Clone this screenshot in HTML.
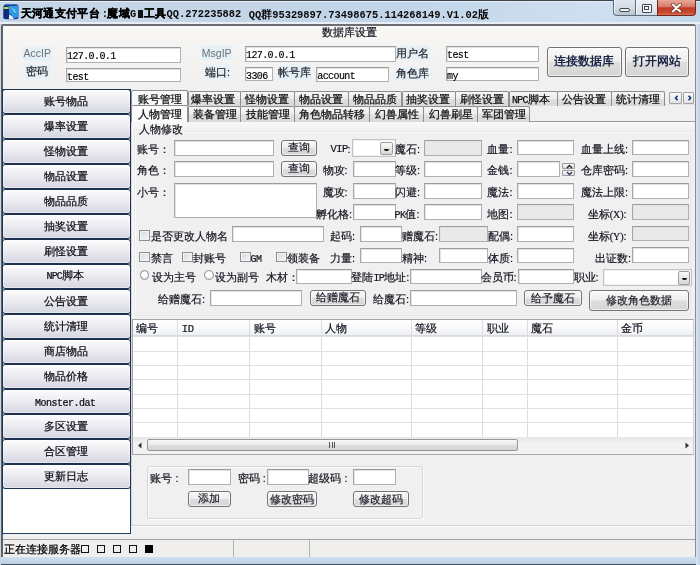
<!DOCTYPE html><html><head><meta charset="utf-8"><style>
*{margin:0;padding:0;box-sizing:border-box}
html,body{width:700px;height:565px;overflow:hidden}
body{position:relative;will-change:transform;background:#c8d7e6;font-family:"Liberation Sans",sans-serif;color:#222}
div{position:absolute}
.t{white-space:nowrap;color:#141420;-webkit-text-stroke:0.2px #141420}
.inp{background:#fff;border:1px solid #b0b0b0;border-top-color:#9c9c9c;border-left-color:#a8a8a8;box-shadow:inset 1px 1px 0 #e2e2e2}
.mv{position:absolute;left:0px;top:2.5px;font:10px/11px "Liberation Mono",monospace;letter-spacing:-0.6px;color:#000;white-space:nowrap;-webkit-text-stroke:0.15px #000}
.btn{border:1px solid #747474;border-radius:3px;background:linear-gradient(#fafafa,#ededed 48%,#dedede 52%,#d5d5d5);box-shadow:inset 0 0 0 1px rgba(255,255,255,.6);display:flex;align-items:center;justify-content:center}
.btn span{font-size:11px;line-height:11px;color:#1e1e2a;white-space:nowrap;-webkit-text-stroke:0.2px #1e1e2a}
.nav{border:1px solid #1c3050;border-radius:3px;background:linear-gradient(#fcfcfd,#ececf1 45%,#dcdce6 85%,#d6d6e2);box-shadow:inset 0 0 0 1px rgba(255,255,255,.4);display:flex;align-items:center;justify-content:center}
.nav span{font-size:11px;line-height:11px;color:#0c0c14;white-space:nowrap;-webkit-text-stroke:0.22px #0c0c14;margin-left:-1px}
.tab{border:1px solid #8e8e8e;border-bottom:none;border-radius:2px 2px 0 0;background:linear-gradient(#f6f6f6,#ececec 48%,#dedede 52%,#dadada)}
.tab span,.stab span{position:absolute;font-size:11px;line-height:11px;white-space:nowrap;color:#111;-webkit-text-stroke:0.25px #111}
.stab{border:1px solid #8e8e8e;border-bottom:none;border-radius:2px 2px 0 0;background:#f8f9fa}
.lb{background:#e4eff6;box-shadow:inset 0 0 2px 1px #f2f6f8;display:flex;align-items:center;justify-content:center}
.lb span{font-size:11px;line-height:11px;white-space:nowrap;color:#26262e;-webkit-text-stroke:0.2px #26262e}
.cmb{background:#fff;border:1.5px solid #c2c2c2;box-shadow:inset 0 0 0 1px #f0f0f0}
.cbtn{border:1px solid #9c9c9c;border-radius:2px;background:linear-gradient(#fbfbfb,#e6e6e6 50%,#d6d6d6)}
.cbtn i{position:absolute;left:3px;top:5.5px;width:5px;height:2px;background:#111;border-radius:0 0 2px 2px}
.chk{border:1px solid #8e8f8f;background:linear-gradient(135deg,#d4dbe2,#f4f6f8);box-shadow:inset 0 0 0 1px #f4f4f4}
.rad{border:1px solid #8e8f8f;border-radius:50%;background:radial-gradient(circle at 50% 45%,#ffffff 30%,#dcdcdc)}
</style></head><body><div style="left:0px;top:0px;width:700px;height:565px;background:#c6d8ea;"></div>
<div style="left:0px;top:0px;width:700px;height:1px;background:#3e454e;"></div>
<div style="left:0px;top:1px;width:700px;height:1px;background:#e4ecf4;"></div>
<div style="left:0px;top:2px;width:700px;height:21px;background:linear-gradient(90deg,#c6d6e6,#c2d4e8 55%,#cddff0 85%,#c4d6ea);"></div>
<div style="left:0px;top:22px;width:700px;height:1.5px;background:#e8eef4;"></div>
<svg style="position:absolute;left:3px;top:4px" width="16" height="16" viewBox="0 0 16 16">
<rect x="0.5" y="0.2" width="15" height="15" rx="2.5" fill="#1a4c9c"/>
<rect x="0.5" y="2" width="5.5" height="13" rx="1" fill="#0c2a7a"/>
<rect x="0.7" y="3" width="5" height="2" fill="#c8d040"/>
<path d="M6 2 L15 2 L15 13 L11 14 Q8 10 6 9 Z" fill="#2f9ae6"/>
<path d="M9 4 Q12 5 13 9 L11 8 Q10 6 9 4Z" fill="#8fd4fa"/>
<path d="M6 10.5 L9 12 L11 15 L6 15 Z" fill="#e4f0fa"/>
</svg>
<div style="left:20.5px;top:7px;white-space:nowrap;font:bold 11.3px/12px 'Liberation Sans',sans-serif;color:#000;letter-spacing:0.4px;-webkit-text-stroke:0.3px #000;">天河通支付平台</div>
<div style="left:101.8px;top:7.5px;white-space:nowrap;font:bold 10.4px/12px 'Liberation Mono',monospace;color:#0a0a0a;">:</div>
<div style="left:107.2px;top:7px;white-space:nowrap;font:bold 11.3px/12px 'Liberation Sans',sans-serif;color:#000;letter-spacing:0.4px;-webkit-text-stroke:0.3px #000;">魔域</div>
<div style="left:130px;top:7.5px;white-space:nowrap;font:bold 10.4px/12px 'Liberation Mono',monospace;color:#0a0a0a;">G</div>
<div style="left:137.9px;top:10.4px;width:5.1px;height:7.2px;background:#111;"></div>
<div style="left:143.7px;top:7px;white-space:nowrap;font:bold 11.3px/12px 'Liberation Sans',sans-serif;color:#000;letter-spacing:0.4px;-webkit-text-stroke:0.3px #000;">工具</div>
<div style="left:166.5px;top:7.5px;white-space:nowrap;font:bold 10.4px/12px 'Liberation Mono',monospace;color:#0a0a0a;">QQ.272235882</div>
<div style="left:248.7px;top:7.5px;white-space:nowrap;font:bold 10.4px/12px 'Liberation Mono',monospace;color:#0a0a0a;">QQ<span style="font-size:11.3px;font-family:'Liberation Sans'">群</span>95329897.73498675.114268149.V1.02<span style="font-size:11.3px;font-family:'Liberation Sans'">版</span></div>
<div style="left:612.5px;top:0;width:23px;height:16px;border:1px solid #5e6b7a;border-top:none;border-right:none;border-radius:0 0 0 4px;background:linear-gradient(#dfe6ee,#d4dce6 50%,#b8c4d2);box-shadow:inset 1px 0 0 #f0f4f8"><div style="left:5.5px;top:8px;width:11px;height:4px;border-radius:2px;background:#f4f6f8;border:1px solid #404852"></div></div>
<div style="left:635px;top:0;width:22px;height:16px;border:1px solid #5e6b7a;border-top:none;border-right:none;background:linear-gradient(#eef2f6,#e2e8ee 50%,#d2dae4);box-shadow:inset 1px 0 0 #f4f6f8"><div style="left:5.5px;top:4px;width:10.5px;height:8.5px;background:#f4f6f8;border:1.5px solid #404852;border-radius:1px"><div style="left:1px;top:1px;width:5.5px;height:3.5px;border:1px solid #404852;background:#fff"></div></div></div>
<div style="left:657px;top:0;width:39px;height:16px;border:1px solid #6e2a22;border-top:none;border-radius:0 0 4px 0;background:linear-gradient(#e8a898,#d87868 45%,#c23a24 52%,#c84a30 85%,#e07050)"></div>
<svg style="position:absolute;left:670px;top:3px" width="13" height="10" viewBox="0 0 13 10"><path d="M2.8 1.6 L10.2 8.4 M10.2 1.6 L2.8 8.4" stroke="#6a3a30" stroke-width="3.4" stroke-linecap="round"/><path d="M2.8 1.6 L10.2 8.4 M10.2 1.6 L2.8 8.4" stroke="#fff" stroke-width="2" stroke-linecap="round"/></svg>
<div style="left:1px;top:24px;width:695px;height:533px;background:#f0f0f0;border-top:2px solid #6a6d71;border-left:2px solid #5e6166;border-right:1.5px solid #8a8d90;border-radius:2px 3px 0 0;"></div>
<div style="left:3px;top:26px;width:691.5px;height:63px;background:linear-gradient(#f8f7f4,#f5f4f2 30%,#f0f0f0);"></div>
<div class="t" style="left:322px;top:26.5px;font-size:11px;line-height:11px;">数据库设置</div>
<div class="lb" style="left:21.5px;top:45.5px;width:31.5px;height:16px;"><span style="font-size:10.5px;color:#6c7278;-webkit-text-stroke:0">AccIP</span></div>
<div class="lb" style="left:23.5px;top:63.5px;width:27.2px;height:16.5px;"><span style="">密码</span></div>
<div class="lb" style="left:200px;top:45px;width:33.4px;height:16px;"><span style="font-size:10.5px;color:#6c7278;-webkit-text-stroke:0">MsgIP</span></div>
<div class="lb" style="left:203.7px;top:64px;width:27.7px;height:16px;"><span style="">端口:</span></div>
<div class="lb" style="left:275.7px;top:65px;width:37.2px;height:15.6px;"><span style="">帐号库</span></div>
<div class="lb" style="left:394px;top:45px;width:36px;height:16.4px;"><span style="">用户名</span></div>
<div class="lb" style="left:395px;top:65.7px;width:35px;height:14.9px;"><span style="">角色库</span></div>
<div class="inp" style="left:66px;top:47px;width:115px;height:15.6px;"><span class="mv">127.0.0.1</span></div>
<div class="inp" style="left:66px;top:68.3px;width:115px;height:13.7px;"><span class="mv">test</span></div>
<div class="inp" style="left:245px;top:46.3px;width:151px;height:16px;"><span class="mv">127.0.0.1</span></div>
<div class="inp" style="left:245px;top:67px;width:28.4px;height:14.4px;"><span class="mv">3306</span></div>
<div class="inp" style="left:316.3px;top:67px;width:72.7px;height:15px;"><span class="mv">account</span></div>
<div class="inp" style="left:446px;top:46.3px;width:92.6px;height:16px;"><span class="mv">test</span></div>
<div class="inp" style="left:446px;top:67px;width:92.6px;height:14.4px;"><span class="mv">my</span></div>
<div class="btn" style="left:546.5px;top:46.6px;width:75.3px;height:30.6px;"><span><b style="color:#1c2444;font-size:11.5px;-webkit-text-stroke:0">连接数据库</b></span></div>
<div class="btn" style="left:624.7px;top:46.6px;width:64.3px;height:30.6px;"><span><b style="color:#1c2444;font-size:11.5px;-webkit-text-stroke:0">打开网站</b></span></div>
<div style="left:1.5px;top:89px;width:129.5px;height:444.5px;background:#fff;border:1.5px solid #24405e;"></div>
<div class="nav" style="left:1.5px;top:89px;width:129.5px;height:24.5px;"><span>账号物品</span></div>
<div class="nav" style="left:1.5px;top:114px;width:129.5px;height:24.5px;"><span>爆率设置</span></div>
<div class="nav" style="left:1.5px;top:139px;width:129.5px;height:24.5px;"><span>怪物设置</span></div>
<div class="nav" style="left:1.5px;top:164px;width:129.5px;height:24.5px;"><span>物品设置</span></div>
<div class="nav" style="left:1.5px;top:189px;width:129.5px;height:24.5px;"><span>物品品质</span></div>
<div class="nav" style="left:1.5px;top:214px;width:129.5px;height:24.5px;"><span>抽奖设置</span></div>
<div class="nav" style="left:1.5px;top:239px;width:129.5px;height:24.5px;"><span>刷怪设置</span></div>
<div class="nav" style="left:1.5px;top:264px;width:129.5px;height:24.5px;"><span><span style="font-family:'Liberation Mono',monospace;font-size:10px;letter-spacing:-0.8px">NPC</span>脚本</span></div>
<div class="nav" style="left:1.5px;top:289px;width:129.5px;height:24.5px;"><span>公告设置</span></div>
<div class="nav" style="left:1.5px;top:314px;width:129.5px;height:24.5px;"><span>统计清理</span></div>
<div class="nav" style="left:1.5px;top:339px;width:129.5px;height:24.5px;"><span>商店物品</span></div>
<div class="nav" style="left:1.5px;top:364px;width:129.5px;height:24.5px;"><span>物品价格</span></div>
<div class="nav" style="left:1.5px;top:389px;width:129.5px;height:24.5px;"><span><span style="font-family:'Liberation Mono',monospace;font-size:10px;letter-spacing:-0.5px;position:relative;top:1.5px;-webkit-text-stroke:0.2px #000">Monster.dat</span></span></div>
<div class="nav" style="left:1.5px;top:414px;width:129.5px;height:24.5px;"><span>多区设置</span></div>
<div class="nav" style="left:1.5px;top:439px;width:129.5px;height:24.5px;"><span>合区管理</span></div>
<div class="nav" style="left:1.5px;top:464px;width:129.5px;height:24.5px;"><span>更新日志</span></div>
<div style="left:131px;top:104px;width:563.5px;height:422px;background:#f0f0f0;border:1px solid #8e8e8e;border-top-color:#e2e2e2;border-left-color:#d6d6d6;border-right:none;border-bottom-color:#d4d4d4;box-shadow:0 1px 0 #fafafa;"></div>
<div style="left:691.5px;top:122px;width:1px;height:403px;background:#fafafa;"></div>
<div class="stab" style="left:131.3px;top:89.6px;width:56.9px;height:15.4px;"><span style="left:5.5px;top:3.5px">账号管理</span></div>
<div class="tab" style="left:187.6px;top:91px;width:53.2px;height:14.8px;"><span style="left:2.4px;top:2px">爆率设置</span></div>
<div class="tab" style="left:240px;top:91px;width:54.6px;height:14.8px;"><span style="left:3.5px;top:2px">怪物设置</span></div>
<div class="tab" style="left:293.9px;top:91px;width:54.7px;height:14.8px;"><span style="left:4.1px;top:2px">物品设置</span></div>
<div class="tab" style="left:348px;top:91px;width:54.4px;height:14.8px;"><span style="left:3.5px;top:2px">物品品质</span></div>
<div class="tab" style="left:401.9px;top:91px;width:53.8px;height:14.8px;"><span style="left:3.5px;top:2px">抽奖设置</span></div>
<div class="tab" style="left:455px;top:91px;width:54.3px;height:14.8px;"><span style="left:3.5px;top:2px">刷怪设置</span></div>
<div class="tab" style="left:508.6px;top:91px;width:49.4px;height:14.8px;"><span style="left:2.5px;top:2px"><span style="position:static;font-family:'Liberation Mono',monospace;font-size:10px;letter-spacing:-0.8px">NPC</span>脚本</span></div>
<div class="tab" style="left:557.4px;top:91px;width:54.6px;height:14.8px;"><span style="left:3.5px;top:2px">公告设置</span></div>
<div class="tab" style="left:611.4px;top:91px;width:53.8px;height:14.8px;"><span style="left:3.5px;top:2px">统计清理</span></div>
<div style="left:669.1px;top:91.6px;width:12.7px;height:12.8px;border:1px solid #a2a2a2;border-radius:1px;background:linear-gradient(#fafafa,#e4e4e4);"><svg style="position:absolute;left:0;top:0" width="12" height="12"><path d="M7.6 2.8 L5.6 5 L7.6 7.2" stroke="#1a3680" stroke-width="1.7" fill="none"/></svg></div>
<div style="left:683.3px;top:91.6px;width:11.1px;height:12.8px;border:1px solid #a2a2a2;border-radius:1px;background:linear-gradient(#fafafa,#e4e4e4);"><svg style="position:absolute;left:0;top:0" width="12" height="12"><path d="M4.6 2.8 L6.6 5 L4.6 7.2" stroke="#1a3680" stroke-width="1.7" fill="none"/></svg></div>
<div style="left:132px;top:121px;width:562.5px;height:197.5px;background:#f0f0f0;border-top:1px solid #9c9c9c;"></div>
<div style="left:132px;top:104.8px;width:4px;height:213.7px;background:linear-gradient(90deg,#fafafa,#f0f0f0);"></div>
<div class="stab" style="left:131.3px;top:104.5px;width:56.9px;height:17.5px;background:#fbfbfb;"><span style="left:5.5px;top:3px">人物管理</span></div>
<div class="tab" style="left:187.6px;top:105.8px;width:53.2px;height:15.8px;"><span style="left:4.1px;top:2.5px">装备管理</span></div>
<div class="tab" style="left:240px;top:105.8px;width:54.6px;height:15.8px;"><span style="left:4.8px;top:2.5px">技能管理</span></div>
<div class="tab" style="left:293.9px;top:105.8px;width:75.7px;height:15.8px;"><span style="left:4.4px;top:2.5px">角色物品转移</span></div>
<div class="tab" style="left:368.9px;top:105.8px;width:55.1px;height:15.8px;"><span style="left:5.1px;top:2.5px">幻兽属性</span></div>
<div class="tab" style="left:423.3px;top:105.8px;width:54.3px;height:15.8px;"><span style="left:4.7px;top:2.5px">幻兽刷星</span></div>
<div class="tab" style="left:477px;top:105.8px;width:52.5px;height:15.8px;"><span style="left:3.8px;top:2.5px">军团管理</span></div>
<div style="left:134px;top:130.5px;width:556.5px;height:185.5px;border:1px solid #e6e6e6;border-top:none;border-radius:0 0 3px 3px;box-shadow:inset 1px 0 0 #fbfbfb;"></div>
<div style="left:185px;top:130.5px;width:505.5px;height:1.5px;border-top:1px solid #e8e8e8;border-bottom:1px solid #fbfbfb;"></div>
<div style="left:132px;top:121.6px;width:562.5px;height:7.4px;background:linear-gradient(#f8f8f8,#f2f2f2);"></div>
<div class="t" style="left:139px;top:124px;font-size:11px;line-height:11px;">人物修改</div>
<div class="t" style="left:136.6px;top:143.5px;font-size:11px;line-height:11px;">账号：</div>
<div class="inp" style="left:173.6px;top:140px;width:100px;height:16px;"></div>
<div class="btn" style="left:281.4px;top:140px;width:35.2px;height:15.6px;"><span>查询</span></div>
<div class="t" style="left:330.5px;top:144px;font-size:11px;line-height:11px;font-family:'Liberation Mono',monospace;font-size:10.5px;letter-spacing:-0.6px">VIP</div>
<div class="t" style="left:347.6px;top:143.5px;font-size:11px;line-height:11px;">:</div>
<div class="cmb" style="left:352.4px;top:139.4px;width:43.3px;height:18px;"></div>
<div class="cbtn" style="left:380.3px;top:142px;width:12.4px;height:13.3px;"><i></i></div>
<div class="t" style="left:395px;top:143.5px;font-size:11px;line-height:11px;">魔石:</div>
<div class="inp" style="left:424px;top:140px;width:57.6px;height:15.6px;background:#e9e9e9;"></div>
<div class="t" style="left:487.4px;top:143.5px;font-size:11px;line-height:11px;">血量:</div>
<div class="inp" style="left:517.3px;top:140px;width:57px;height:15.4px;"></div>
<div class="t" style="left:581px;top:143.5px;font-size:11px;line-height:11px;">血量上线:</div>
<div class="inp" style="left:632px;top:140px;width:56.6px;height:15.4px;"></div>
<div class="t" style="left:136.6px;top:164.5px;font-size:11px;line-height:11px;">角色：</div>
<div class="inp" style="left:173.6px;top:161px;width:100px;height:16px;"></div>
<div class="btn" style="left:281.4px;top:161px;width:35.2px;height:15.6px;"><span>查询</span></div>
<div class="t" style="left:322.6px;top:164.5px;font-size:11px;line-height:11px;">物攻:</div>
<div class="inp" style="left:353px;top:161px;width:42.6px;height:16px;"></div>
<div class="t" style="left:395px;top:164.5px;font-size:11px;line-height:11px;">等级:</div>
<div class="inp" style="left:424px;top:161px;width:57.6px;height:16px;"></div>
<div class="t" style="left:487.4px;top:164.5px;font-size:11px;line-height:11px;">金钱:</div>
<div class="inp" style="left:517.3px;top:161px;width:42.7px;height:16px;"></div>
<div style="left:562.1px;top:163.2px;width:12.6px;height:6.3px;border:1px solid #9a9a9a;border-radius:1px;background:linear-gradient(#f8f8f8,#dcdcdc);"><svg style="position:absolute;left:2px;top:0" width="9" height="5"><path d="M2 4 L4.5 1.5 L7 4" stroke="#223" stroke-width="1.4" fill="none"/></svg></div>
<div style="left:562.1px;top:169.5px;width:12.6px;height:6.3px;border:1px solid #9a9a9a;border-radius:1px;background:linear-gradient(#f8f8f8,#dcdcdc);"><svg style="position:absolute;left:2px;top:0" width="9" height="5"><path d="M2 1 L4.5 3.5 L7 1" stroke="#336" stroke-width="1.4" fill="none"/></svg></div>
<div class="t" style="left:581px;top:164.5px;font-size:11px;line-height:11px;">仓库密码:</div>
<div class="inp" style="left:632px;top:161px;width:56.6px;height:16px;"></div>
<div class="t" style="left:136.6px;top:186.5px;font-size:11px;line-height:11px;">小号：</div>
<div class="inp" style="left:173.6px;top:182.6px;width:143px;height:35.4px;"></div>
<div class="t" style="left:322.6px;top:186.5px;font-size:11px;line-height:11px;">魔攻:</div>
<div class="inp" style="left:353px;top:183px;width:42.6px;height:15.6px;"></div>
<div class="t" style="left:395px;top:186.5px;font-size:11px;line-height:11px;">闪避:</div>
<div class="inp" style="left:424px;top:183px;width:57.6px;height:15.6px;"></div>
<div class="t" style="left:487.4px;top:186.5px;font-size:11px;line-height:11px;">魔法:</div>
<div class="inp" style="left:517.3px;top:183px;width:57px;height:15.6px;"></div>
<div class="t" style="left:581px;top:186.5px;font-size:11px;line-height:11px;">魔法上限:</div>
<div class="inp" style="left:632px;top:183px;width:56.6px;height:15.6px;"></div>
<div class="t" style="left:316px;top:208.5px;font-size:11px;line-height:11px;">孵化格:</div>
<div class="inp" style="left:353px;top:204px;width:42.6px;height:16px;"></div>
<div class="t" style="left:394.6px;top:208.5px;font-size:11px;line-height:11px;"><span style="font-family:'Liberation Mono';font-size:10px;letter-spacing:-0.6px">PK</span>值:</div>
<div class="inp" style="left:424px;top:204px;width:57.6px;height:16px;"></div>
<div class="t" style="left:487.4px;top:208.5px;font-size:11px;line-height:11px;">地图:</div>
<div class="inp" style="left:517.3px;top:204px;width:57px;height:16px;background:#e9e9e9;"></div>
<div class="t" style="left:587.7px;top:208.5px;font-size:11px;line-height:11px;">坐标<span style="font-family:'Liberation Serif';font-size:10px">(X)</span>:</div>
<div class="inp" style="left:632px;top:204px;width:56.6px;height:16px;background:#e9e9e9;"></div>
<div class="chk" style="left:139.2px;top:230.3px;width:11.2px;height:11.1px;"></div>
<div class="t" style="left:151px;top:231px;font-size:11px;line-height:11px;">是否更改人物名</div>
<div class="inp" style="left:231.6px;top:226px;width:92px;height:15.6px;"></div>
<div class="t" style="left:330px;top:230.5px;font-size:11px;line-height:11px;">起码:</div>
<div class="inp" style="left:360.4px;top:226px;width:42px;height:15.6px;"></div>
<div class="t" style="left:402px;top:230.5px;font-size:11px;line-height:11px;">赠魔石:</div>
<div class="inp" style="left:439px;top:226px;width:49px;height:15.6px;background:#e9e9e9;"></div>
<div class="t" style="left:488px;top:230.5px;font-size:11px;line-height:11px;">配偶:</div>
<div class="inp" style="left:517.3px;top:226px;width:57px;height:15.6px;"></div>
<div class="t" style="left:587.7px;top:230.5px;font-size:11px;line-height:11px;">坐标<span style="font-family:'Liberation Serif';font-size:10px">(Y)</span>:</div>
<div class="inp" style="left:632px;top:226px;width:56.6px;height:15.2px;background:#e9e9e9;"></div>
<div class="chk" style="left:139.2px;top:251.5px;width:11.2px;height:10.5px;"></div>
<div class="t" style="left:151px;top:252.5px;font-size:11px;line-height:11px;">禁言</div>
<div class="chk" style="left:182px;top:251.5px;width:11.2px;height:10.5px;"></div>
<div class="t" style="left:193.4px;top:252.5px;font-size:11px;line-height:11px;">封账号</div>
<div class="chk" style="left:239.6px;top:251.5px;width:11.2px;height:10.5px;"></div>
<div class="t" style="left:250.6px;top:252.5px;font-size:11px;line-height:11px;"><span style="font-family:'Liberation Mono';font-size:10px;letter-spacing:-0.6px">GM</span></div>
<div class="chk" style="left:275.6px;top:251.5px;width:11.2px;height:10.5px;"></div>
<div class="t" style="left:287px;top:252.5px;font-size:11px;line-height:11px;">领装备</div>
<div class="t" style="left:330px;top:252.5px;font-size:11px;line-height:11px;">力量:</div>
<div class="inp" style="left:360.4px;top:247.6px;width:42px;height:15px;"></div>
<div class="t" style="left:402px;top:252.5px;font-size:11px;line-height:11px;">精神:</div>
<div class="inp" style="left:439px;top:247.6px;width:49.4px;height:15px;"></div>
<div class="t" style="left:488px;top:252.5px;font-size:11px;line-height:11px;">体质:</div>
<div class="inp" style="left:517.3px;top:247.6px;width:57px;height:15px;"></div>
<div class="t" style="left:595px;top:252.5px;font-size:11px;line-height:11px;">出证数:</div>
<div class="inp" style="left:632px;top:247px;width:56.6px;height:16px;"></div>
<div class="rad" style="left:139.8px;top:270.4px;width:9.7px;height:9.7px;"></div>
<div class="t" style="left:151.5px;top:271.5px;font-size:11px;line-height:11px;">设为主号</div>
<div class="rad" style="left:204.4px;top:270.4px;width:9.7px;height:9.7px;"></div>
<div class="t" style="left:215.4px;top:271.5px;font-size:11px;line-height:11px;">设为副号</div>
<div class="t" style="left:266px;top:271.5px;font-size:11px;line-height:11px;">木材：</div>
<div class="inp" style="left:295.6px;top:269px;width:56.8px;height:15.4px;"></div>
<div class="t" style="left:351.4px;top:271.5px;font-size:11px;line-height:11px;">登陆<span style="font-family:'Liberation Mono';font-size:10px;letter-spacing:-0.6px">IP</span>地址:</div>
<div class="inp" style="left:410.4px;top:269px;width:71.2px;height:15.4px;"></div>
<div class="t" style="left:480.6px;top:271.5px;font-size:11px;line-height:11px;">会员币:</div>
<div class="inp" style="left:517.6px;top:269px;width:56.7px;height:15.4px;"></div>
<div class="t" style="left:573.6px;top:271.5px;font-size:11px;line-height:11px;">职业:</div>
<div class="cmb" style="left:603px;top:268.6px;width:89px;height:17.7px;"></div>
<div class="cbtn" style="left:677.8px;top:271px;width:12.2px;height:13.5px;"><i></i></div>
<div class="t" style="left:158px;top:293.5px;font-size:11px;line-height:11px;">给赠魔石:</div>
<div class="inp" style="left:209.6px;top:290px;width:92.8px;height:15.6px;"></div>
<div class="btn" style="left:310px;top:290.4px;width:56px;height:15.2px;"><span>给赠魔石</span></div>
<div class="t" style="left:373px;top:293.5px;font-size:11px;line-height:11px;">给魔石:</div>
<div class="inp" style="left:410.4px;top:290px;width:106.6px;height:15.6px;"></div>
<div class="btn" style="left:524px;top:290px;width:58px;height:16.3px;"><span>给予魔石</span></div>
<div class="btn" style="left:589.3px;top:290px;width:99.9px;height:21px;"><span>修改角色数据</span></div>
<div style="left:131.5px;top:318.5px;width:562.5px;height:136px;background:#fff;border:1px solid #a4a4a4;border-right-color:#d0d0d0;"></div>
<div style="left:132.5px;top:319.5px;width:560.5px;height:16px;background:linear-gradient(#ffffff,#f8f9fa 55%,#eef0f3);border-bottom:1px solid #d8dadd;"></div>
<div class="t" style="left:136px;top:322.5px;font-size:11px;line-height:11px;">编号</div>
<div class="t" style="left:181.8px;top:322.5px;font-size:11px;line-height:11px;"><span style="font-family:'Liberation Mono';font-size:10.5px;letter-spacing:-0.4px">ID</span></div>
<div class="t" style="left:253.8px;top:322.5px;font-size:11px;line-height:11px;">账号</div>
<div class="t" style="left:325.1px;top:322.5px;font-size:11px;line-height:11px;">人物</div>
<div class="t" style="left:415.1px;top:322.5px;font-size:11px;line-height:11px;">等级</div>
<div class="t" style="left:486.8px;top:322.5px;font-size:11px;line-height:11px;">职业</div>
<div class="t" style="left:531px;top:322.5px;font-size:11px;line-height:11px;">魔石</div>
<div class="t" style="left:621.3px;top:322.5px;font-size:11px;line-height:11px;">金币</div>
<div style="left:177.3px;top:319.5px;width:1px;height:118px;background:#dcdcdc;"></div>
<div style="left:249.3px;top:319.5px;width:1px;height:118px;background:#dcdcdc;"></div>
<div style="left:320.6px;top:319.5px;width:1px;height:118px;background:#dcdcdc;"></div>
<div style="left:410.6px;top:319.5px;width:1px;height:118px;background:#dcdcdc;"></div>
<div style="left:482.3px;top:319.5px;width:1px;height:118px;background:#dcdcdc;"></div>
<div style="left:526.5px;top:319.5px;width:1px;height:118px;background:#dcdcdc;"></div>
<div style="left:616.8px;top:319.5px;width:1px;height:118px;background:#dcdcdc;"></div>
<div style="left:132.5px;top:336.4px;width:560.5px;height:1px;background:#e0e0e0;"></div>
<div style="left:132.5px;top:350.68px;width:560.5px;height:1px;background:#e0e0e0;"></div>
<div style="left:132.5px;top:364.96px;width:560.5px;height:1px;background:#e0e0e0;"></div>
<div style="left:132.5px;top:379.24px;width:560.5px;height:1px;background:#e0e0e0;"></div>
<div style="left:132.5px;top:393.52px;width:560.5px;height:1px;background:#e0e0e0;"></div>
<div style="left:132.5px;top:407.8px;width:560.5px;height:1px;background:#e0e0e0;"></div>
<div style="left:132.5px;top:422.08px;width:560.5px;height:1px;background:#e0e0e0;"></div>
<div style="left:132.5px;top:437px;width:560.5px;height:16.5px;background:linear-gradient(#e6e6e6,#f2f2f2 40%,#f2f2f2);"></div>
<div style="left:147.1px;top:439.3px;width:371.3px;height:12.1px;border:1px solid #969696;border-radius:2px;background:linear-gradient(#f6f6f6,#ececec 45%,#dcdcdc 55%,#d4d4d4);"></div>
<svg style="position:absolute;left:137px;top:442px" width="6" height="7"><path d="M4.5 0.5 L1 3.5 L4.5 6.5Z" fill="#333"/></svg>
<svg style="position:absolute;left:684px;top:442px" width="6" height="7"><path d="M1.5 0.5 L5 3.5 L1.5 6.5Z" fill="#333"/></svg>
<div style="left:329px;top:442px;width:1px;height:6px;background:#555;"></div>
<div style="left:331.5px;top:442px;width:1px;height:6px;background:#555;"></div>
<div style="left:334px;top:442px;width:1px;height:6px;background:#555;"></div>
<div style="left:132.5px;top:453.5px;width:560.5px;height:1px;background:#a8a8a8;"></div>
<div style="left:147px;top:465.6px;width:275.5px;height:53.2px;border:1px solid #d6d6d6;border-radius:3px;box-shadow:inset 1px 1px 0 #fbfbfb,1px 1px 0 #fbfbfb;"></div>
<div class="t" style="left:150.4px;top:472.5px;font-size:11px;line-height:11px;">账号 :</div>
<div class="inp" style="left:188px;top:469px;width:42.6px;height:16px;"></div>
<div class="t" style="left:237.6px;top:472.5px;font-size:11px;line-height:11px;">密码 :</div>
<div class="inp" style="left:267px;top:469px;width:42.4px;height:16px;"></div>
<div class="t" style="left:308.4px;top:472.5px;font-size:11px;line-height:11px;">超级码 :</div>
<div class="inp" style="left:352.9px;top:469px;width:42.8px;height:16px;"></div>
<div class="btn" style="left:188px;top:490.9px;width:42.9px;height:16.1px;"><span>添加</span></div>
<div class="btn" style="left:266.6px;top:491px;width:50.4px;height:16px;"><span>修改密码</span></div>
<div class="btn" style="left:352.9px;top:491px;width:56.6px;height:16px;"><span>修改超码</span></div>
<div style="left:3px;top:538.5px;width:691.5px;height:18.5px;background:#f1efee;border-top:1px solid #a4a4a4;"></div>
<div style="left:232.5px;top:540px;width:1px;height:17px;background:#b4b4b4;"></div>
<div style="left:309px;top:540px;width:1px;height:17px;background:#b4b4b4;"></div>
<div class="t" style="left:3.5px;top:543.5px;font-size:11px;line-height:11px;color:#000;-webkit-text-stroke:0.25px #000">正在连接服务器</div>
<div style="left:80.5px;top:544.5px;width:8px;height:8px;border:1px solid #111;"></div>
<div style="left:96.5px;top:544.5px;width:8px;height:8px;border:1px solid #111;"></div>
<div style="left:112.5px;top:544.5px;width:8px;height:8px;border:1px solid #111;"></div>
<div style="left:128.5px;top:544.5px;width:8px;height:8px;border:1px solid #111;"></div>
<div style="left:145px;top:544.5px;width:8px;height:8px;background:#000;"></div>
<div style="left:0px;top:557px;width:700px;height:8px;background:linear-gradient(#cfe0f0,#b8cde2);"></div>
<div style="left:0px;top:563.5px;width:700px;height:1.5px;background:#3e5060;"></div>
<div style="left:695.5px;top:24px;width:4.5px;height:541px;background:linear-gradient(90deg,#d8e6f2,#c0d2e4);"></div>
<div style="left:0px;top:24px;width:1px;height:541px;background:#c8d7e6;"></div></body></html>
